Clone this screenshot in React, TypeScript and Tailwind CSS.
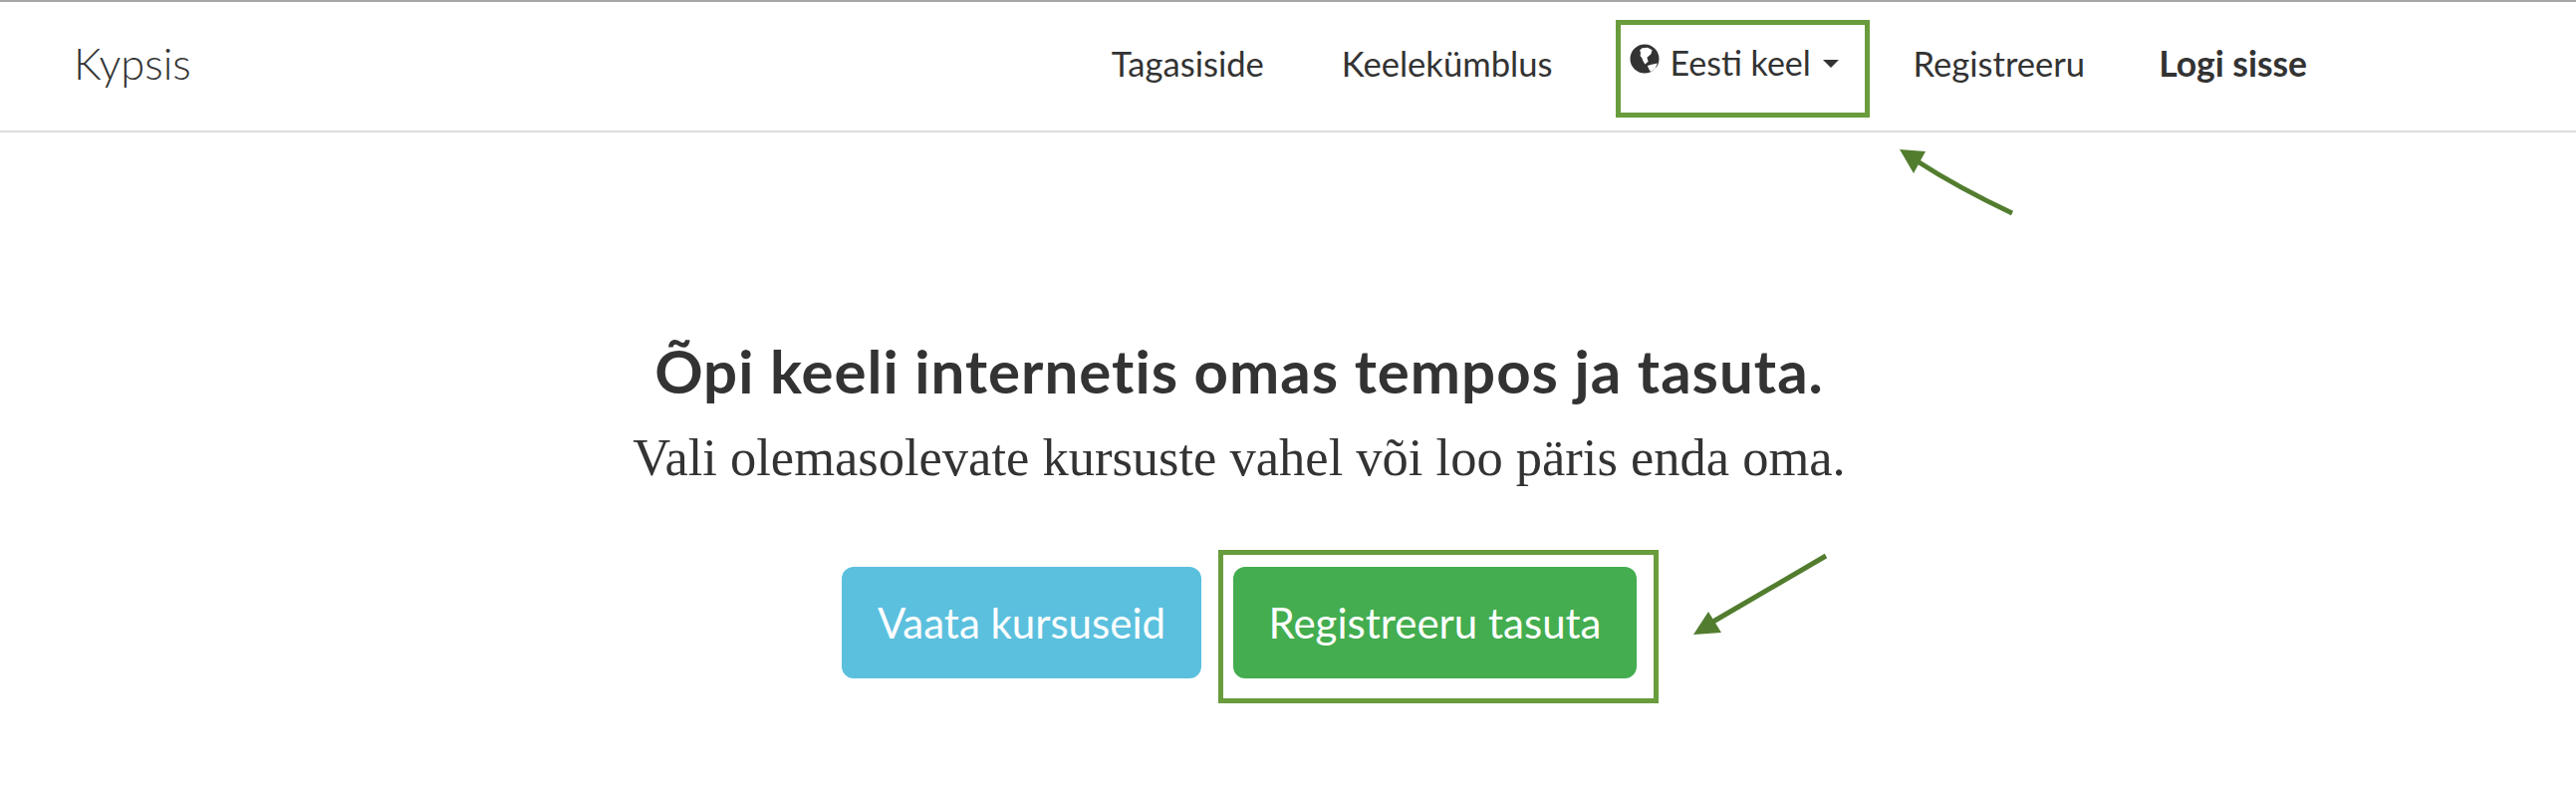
const SANS = "font-['Lato','Noto_Sans',sans-serif]"

function Globe() {
  return (
    <svg className="w-[30px] h-[30px] mr-[10px] -mt-[6px] shrink-0" viewBox="0 0 30 30">
      <circle cx="15" cy="15" r="14.5" fill="#333" />
      <path d="M12.6 4.2 L18 3.8 L22.6 6.2 L21.4 10.2 L17.4 13.8 L18.6 17.8 L15.4 20.4 L13.6 17.4 L12.4 14.6 L10.6 12 L11 8.6 L10 6.6 Z" fill="#fff" />
      <path d="M17.8 22 L22 20.8 L27.8 19.6 L25.6 25.2 L21 28 L19.4 25.4 Z" fill="#fff" />
    </svg>
  )
}

export default function App() {
  return (
    <div className={`relative w-[2586px] h-[788px] overflow-hidden bg-white text-[#333] ${SANS}`}>
      {/* Top nav */}
      <header className="flex items-center h-[133px] pl-[74px] pb-[6px] border-t-2 border-t-[#a6a6a6] border-b-2 border-b-[#dddddd]">
        <span className="text-[43.5px] font-light">Kypsis</span>
        <nav className="flex items-center ml-[924px] text-[34.6px]">
          <a className="mr-[78px]">Tagasiside</a>
          <a className="mr-[64px]">Keelekümblus</a>
          <button className="flex items-center w-[255px] h-[98px] pl-[9px] pb-[13px] mt-[10px] border-[5px] border-[#699c3c]">
            <Globe />
            <span className="text-[34px]">Eesti keel</span>
            <span className="ml-[12px] mt-[4px] border-x-[8px] border-x-transparent border-t-[8px] border-t-[#333]" />
          </button>
          <a className="ml-[43px] mr-[74px]">Registreeru</a>
          <a className="font-bold text-[35.5px]">Logi sisse</a>
        </nav>
      </header>

      {/* Hero */}
      <main className="flex flex-col items-center pr-[98px] pt-[203px]">
        <h1 className="text-[60px] leading-[72px] font-bold tracking-[1px]">Õpi keeli internetis omas tempos ja tasuta.</h1>
        <p className="mt-[21px] text-[52.5px] leading-[60px] font-['Liberation_Serif',serif]">
          Vali olemasolevate kursuste vahel või loo päris enda oma.
        </p>
        <div className="flex items-start -mr-[22px] mt-[63px] text-[42px] text-white">
          <button className="w-[361px] h-[112px] mt-[17px] mr-[17px] rounded-xl bg-[#5bc0de]">Vaata kursuseid</button>
          <div className="w-[442px] h-[154px] pt-[12px] pl-[10px] border-[5px] border-[#699c3c]">
            <button className="w-[405px] h-[112px] rounded-xl bg-[#43ad4f]">Registreeru tasuta</button>
          </div>
        </div>
      </main>

      {/* Annotation arrows */}
      <svg className="absolute left-0 top-0 pointer-events-none" width="2586" height="788" fill="none">
        <path d="M2020 214 Q1965 188 1925 162" stroke="#527d2f" strokeWidth="5" />
        <path d="M1907 150 L1933 152 L1921 174 Z" fill="#527d2f" />
        <path d="M1833 558 L1718 625" stroke="#527d2f" strokeWidth="5" />
        <path d="M1700 637 L1715 614 L1728 635 Z" fill="#527d2f" />
      </svg>
    </div>
  )
}
